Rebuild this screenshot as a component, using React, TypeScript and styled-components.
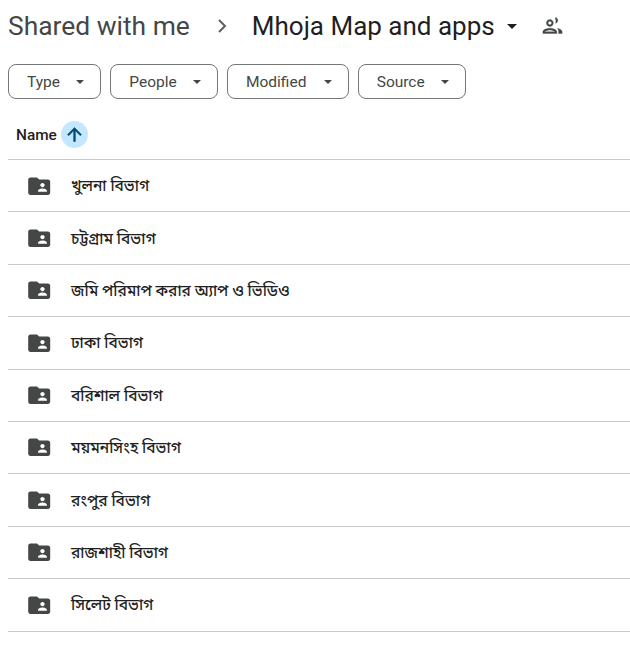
import styled, { createGlobalStyle } from "styled-components"

const GlobalStyle = createGlobalStyle`
  html, body {
    margin: 0;
    background: #fff;
    overflow: hidden;
  }
`

const Page = styled.div`
  width: 630px;
  height: 657px;
  box-sizing: border-box;
  padding-left: 8px;
  font-family: Roboto, "Noto Sans", "Noto Sans Bengali", sans-serif;
  overflow: hidden;
`

const Breadcrumb = styled.div`
  display: flex;
  align-items: center;
  height: 52px;
`

const Parent = styled.span`
  font-size: 26.4px;
  color: #444746;
`

const Current = styled.span`
  font-size: 26px;
  color: #1f1f1f;
`

const Chevron = styled.svg`
  width: 24px;
  height: 24px;
  margin: 0 19px;
  fill: #5e5e5e;
`

const TitleCaret = styled.svg`
  width: 10px;
  height: 5px;
  margin-left: 12px;
  fill: #1f1f1f;
`

const SharedIcon = styled.svg`
  width: 21px;
  height: 21px;
  margin-left: 25px;
  fill: #444746;
  stroke: #444746;
  stroke-width: 0.4;
`

const Filters = styled.div`
  display: flex;
  gap: 9px;
  margin-top: 12px;
`

const Chip = styled.button<{ $width: number }>`
  display: flex;
  align-items: center;
  justify-content: space-between;
  box-sizing: border-box;
  width: ${({ $width }) => $width}px;
  height: 35px;
  padding: 0 16px 0 18px;
  background: #fff;
  border: 1px solid #747775;
  border-radius: 8px;
  font-family: inherit;
  font-size: 15.5px;
  color: #444746;
`

const ChipCaret = styled.svg`
  width: 8px;
  height: 4px;
  fill: #444746;
`

const Header = styled.div`
  display: flex;
  align-items: center;
  height: 61px;
  padding: 11px 0 0 8px;
  border-bottom: 1px solid #c7c7c7;
  box-sizing: border-box;
`

const NameLabel = styled.span`
  font-size: 15.4px;
  font-weight: 500;
  color: #1f1f1f;
`

const SortBadge = styled.span`
  display: flex;
  align-items: center;
  justify-content: center;
  width: 27px;
  height: 27px;
  margin-left: 4px;
  background: #c2e7ff;
  border-radius: 50%;
`

const SortArrow = styled.svg`
  width: 21px;
  height: 21px;
  fill: #004a77;
  stroke: #004a77;
  stroke-width: 0.6;
`

const Row = styled.div`
  display: flex;
  align-items: center;
  box-sizing: border-box;
  height: 52.4px;
  padding-left: 17.8px;
  border-bottom: 1px solid #c7c7c7;
`

const FolderIcon = styled.svg`
  flex: none;
  width: 26.4px;
  height: 26.4px;
  fill: #444746;
`

const RowName = styled.span`
  margin: 3px 0 0 18.8px;
  font-size: 15.5px;
  font-weight: 500;
  color: #1f1f1f;
`

const filters = [
  { label: "Type", width: 93.3 },
  { label: "People", width: 107.7 },
  { label: "Modified", width: 121.7 },
  { label: "Source", width: 108.7 },
]

const folders = [
  "খুলনা বিভাগ",
  "চট্টগ্রাম বিভাগ",
  "জমি পরিমাপ করার অ্যাপ ও ভিডিও",
  "ঢাকা বিভাগ",
  "বরিশাল বিভাগ",
  "ময়মনসিংহ বিভাগ",
  "রংপুর বিভাগ",
  "রাজশাহী বিভাগ",
  "সিলেট বিভাগ",
]

export default function App() {
  return (
    <Page>
      <GlobalStyle />
      <Breadcrumb>
        <Parent>Shared with me</Parent>
        <Chevron viewBox="0 0 24 24">
          <path d="M9.3 6.7 10.7 5.3 17.4 12l-6.7 6.7-1.4-1.4 5.3-5.3z" />
        </Chevron>
        <Current>Mhoja Map and apps</Current>
        <TitleCaret viewBox="0 0 10 5">
          <path d="M0 0h10L5 5z" />
        </TitleCaret>
        <SharedIcon viewBox="0 0 24 24">
          <path d="M9 12c2.200 0 4-1.800 4-4s-1.800-4-4-4-4 1.800-4 4 1.800 4 4 4zm0-6c1.100 0 2 .9 2 2s-.9 2-2 2-2-.9-2-2 .9-2 2-2zm0 8c-2.700 0-8 1.300-8 4v2h16v-2c0-2.700-5.300-4-8-4zm-6 4c.2-.7 3.300-2 6-2s5.800 1.300 6 2H3zm12.400-14.200c.4.900.6 1.400.6 2.200s-.2 1.500-.6 2.200c1.500-.2 2.600-1.500 2.600-3.200s-1.100-3-2.600-3.200zM17.500 14.100c1 .8 1.500 2 1.500 3.900v2h4v-2c0-2-3-3.500-5.500-3.900z" />
        </SharedIcon>
      </Breadcrumb>

      <Filters>
        {filters.map((filter) => (
          <Chip key={filter.label} $width={filter.width}>
            {filter.label}
            <ChipCaret viewBox="0 0 8 4">
              <path d="M0 0h8L4 4z" />
            </ChipCaret>
          </Chip>
        ))}
      </Filters>

      <Header>
        <NameLabel>Name</NameLabel>
        <SortBadge>
          <SortArrow viewBox="0 0 24 24">
            <path d="M4 12l1.400 1.400L11 7.800V20h2V7.800l5.600 5.600L20 12l-8-8z" />
          </SortArrow>
        </SortBadge>
      </Header>

      {folders.map((name) => (
        <Row key={name}>
          <FolderIcon viewBox="0 0 24 24">
            <path d="M20 6h-8l-2-2H4c-1.100 0-2 .9-2 2v12c0 1.100.9 2 2 2h16c1.100 0 2-.9 2-2V8c0-1.100-.9-2-2-2zm-5 3c1.100 0 2 .9 2 2s-.9 2-2 2-2-.9-2-2 .9-2 2-2zm4 8h-8v-1c0-1.300 2.700-2 4-2s4 .7 4 2v1z" />
          </FolderIcon>
          <RowName>{name}</RowName>
        </Row>
      ))}
    </Page>
  )
}
